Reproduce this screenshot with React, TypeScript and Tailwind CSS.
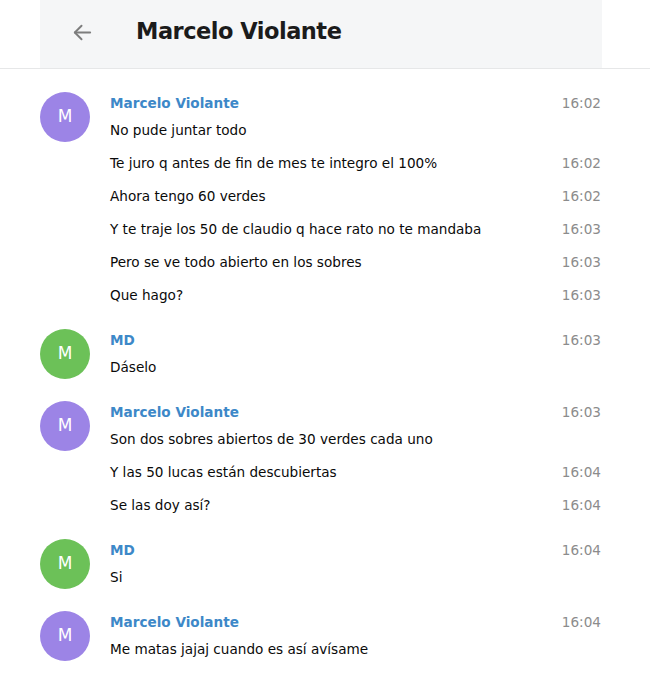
import React from "react";

type Msg = { text: string; time: string };
type Group = { name: string; color: string; time: string; msgs: Msg[] };

const groups: Group[] = [
  {
    name: "Marcelo Violante",
    color: "bg-[#9c84e6]",
    time: "16:02",
    msgs: [
      { text: "No pude juntar todo", time: "" },
      { text: "Te juro q antes de fin de mes te integro el 100%", time: "16:02" },
      { text: "Ahora tengo 60 verdes", time: "16:02" },
      { text: "Y te traje los 50 de claudio q hace rato no te mandaba", time: "16:03" },
      { text: "Pero se ve todo abierto en los sobres", time: "16:03" },
      { text: "Que hago?", time: "16:03" },
    ],
  },
  {
    name: "MD",
    color: "bg-[#6cc158]",
    time: "16:03",
    msgs: [{ text: "Dáselo", time: "" }],
  },
  {
    name: "Marcelo Violante",
    color: "bg-[#9c84e6]",
    time: "16:03",
    msgs: [
      { text: "Son dos sobres abiertos de 30 verdes cada uno", time: "" },
      { text: "Y las 50 lucas están descubiertas", time: "16:04" },
      { text: "Se las doy así?", time: "16:04" },
    ],
  },
  {
    name: "MD",
    color: "bg-[#6cc158]",
    time: "16:04",
    msgs: [{ text: "Si", time: "" }],
  },
  {
    name: "Marcelo Violante",
    color: "bg-[#9c84e6]",
    time: "16:04",
    msgs: [{ text: "Me matas jajaj cuando es así avísame", time: "" }],
  },
];

export default function App() {
  return (
    <div
      className="w-[650px] h-[674px] bg-white overflow-hidden"
      style={{ fontFamily: '"DejaVu Sans", Verdana, sans-serif' }}
    >
      <div className="border-b border-[#e6e7e8]">
        <div className="ml-[40px] w-[562px] h-[68px] bg-[#f5f6f7] flex items-center">
          <svg
            className="ml-[31px] -mt-[4px]"
            width="23"
            height="23"
            viewBox="0 0 24 24"
            fill="none"
            stroke="#7d7d7d"
            strokeWidth="2"
            strokeLinecap="round"
            strokeLinejoin="round"
          >
            <path d="M20 12H4" />
            <path d="M11 19l-7-7 7-7" />
          </svg>
          <div className="ml-[42px] -mt-[4px] text-[22.5px] font-semibold text-[#1b1b1b] tracking-[-0.5px]">
            Marcelo Violante
          </div>
        </div>
      </div>
      <div className="pl-[40px] pr-[49px] pt-[23px] flex flex-col gap-[17px]">
        {groups.map((g, i) => (
          <div key={i} className="flex items-start">
            <div
              className={`w-[50px] h-[50px] rounded-full ${g.color} flex items-center justify-center text-white text-[17px] shrink-0`}
            >
              M
            </div>
            <div className="ml-[20px] flex-1 mt-[1px]">
              <div className="h-[21px] flex items-center justify-between">
                <span className="text-[13.6px] font-semibold text-[#3d88c8]">{g.name}</span>
                <span className="text-[13.6px] text-[#8c8c8c]">{g.time}</span>
              </div>
              {g.msgs.map((m, j) => (
                <div key={j} className="h-[33px] flex items-center justify-between">
                  <span className="text-[13.6px] text-[#0a0a0a]">{m.text}</span>
                  <span className="text-[13.6px] text-[#8c8c8c]">{m.time}</span>
                </div>
              ))}
            </div>
          </div>
        ))}
      </div>
    </div>
  );
}
